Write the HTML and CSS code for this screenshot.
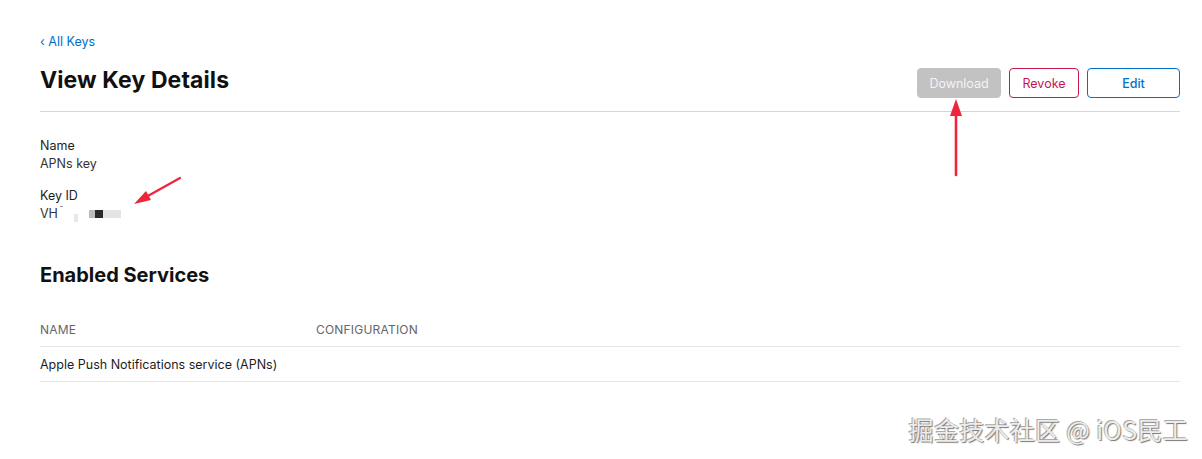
FILE: index.html
```html
<!DOCTYPE html>
<html>
<head>
<meta charset="utf-8">
<link rel="stylesheet" href="styles.css">
</head>
<body>
<div class="page">
  <a class="back" href="#">‹ All Keys</a>
  <div class="header">
    <h1 class="title">View Key Details</h1>
    <div class="actions">
      <button class="btn btn-download">Download</button>
      <button class="btn btn-revoke">Revoke</button>
      <button class="btn btn-edit">Edit</button>
    </div>
  </div>
  <div class="details">
    <div class="field">
      <div class="label">Name</div>
      <div class="value">APNs key</div>
    </div>
    <div class="field">
      <div class="label">Key ID</div>
      <div class="value keyid">VH<span class="tick">ˉ</span><span class="blur b1"></span><span class="blur b2"></span><span class="blur b3"></span><span class="blur b4"></span></div>
    </div>
  </div>
  <h2 class="section">Enabled Services</h2>
  <div class="table">
    <div class="row head">
      <div class="col-name">NAME</div>
      <div class="col-config">CONFIGURATION</div>
    </div>
    <div class="row">
      <div class="col-name">Apple Push Notifications service (APNs)</div>
      <div class="col-config"></div>
    </div>
  </div>
</div>
<svg class="arrows" width="1202" height="459" viewBox="0 0 1202 459">
  <path d="M180 178 L146 197" stroke="#f0243a" stroke-width="2.2" fill="none" stroke-linecap="round"/>
  <path d="M134 204 L146 191 L151 200 Z" fill="#f0243a"/>
  <path d="M956 175 L956 110" stroke="#f0243a" stroke-width="2.6" fill="none" stroke-linecap="round"/>
  <path d="M956 99 L950 116 L962 116 Z" fill="#f0243a"/>
</svg>
<div class="watermark">掘金技术社区 @ iOS民工</div>
</body>
</html>
```
FILE: styles.css
```css
* { box-sizing: border-box; }
html, body { margin: 0; padding: 0; background: #fff; }
body {
  font-family: "Inter", "Liberation Sans", "Noto Sans CJK SC", sans-serif;
  color: #1d1d1f;
  width: 1202px;
  height: 459px;
  overflow: hidden;
  position: relative;
}
.page {
  padding: 34px 22px 0 40px;
}
.back {
  display: block;
  font-size: 12.5px;
  color: #0070c9;
  text-decoration: none;
  line-height: 16px;
}
.header {
  display: flex;
  align-items: flex-end;
  justify-content: space-between;
  border-bottom: 1px solid #d6d6d6;
  padding-bottom: 13px;
  margin-top: 16px;
}
.title {
  margin: 0;
  font-size: 23px;
  font-weight: 700;
  line-height: 28px;
  letter-spacing: 0.1px;
  margin-bottom: 4px;
  color: #111;
}
.actions {
  display: flex;
  gap: 8px;
}
.btn {
  font-family: inherit;
  font-size: 12.5px;
  height: 30px;
  border-radius: 4px;
  padding: 0;
  background: #fff;
  cursor: pointer;
}
.btn-download {
  width: 84px;
  background: #c2c2c2;
  border: 1px solid #c2c2c2;
  color: #f4f4f4;
}
.btn-revoke {
  width: 70px;
  border: 1px solid #c6194a;
  color: #c6194a;
}
.btn-edit {
  width: 93px;
  border: 1px solid #0070c9;
  color: #0070c9;
  font-weight: 500;
}
.details {
  padding-top: 26px;
  display: flex;
  flex-direction: column;
  gap: 16px;
}
.field { display: flex; flex-direction: column; gap: 2px; }
.label { font-size: 12.5px; line-height: 16px; color: #1d1d1f; }
.value { font-size: 12.5px; line-height: 16px; color: #333; }
.keyid { display: flex; align-items: center; }
.tick { font-size: 10px; margin-left: 1px; margin-top: -8px; color: #666; }
.blur { display: inline-block; height: 8px; }
.b1 { background: #e8e8e8; margin-left: 10px; height: 8px; margin-top: 8px; width: 4px; }
.b2 { width: 6px; background: #bcbcbc; margin-left: 11px; }
.b3 { width: 8px; background: #2a2a2a; }
.b4 { width: 18px; background: #e4e4e4; }
.section {
  margin: 41px 0 0;
  font-size: 20px;
  font-weight: 700;
  line-height: 24px;
  color: #111;
}
.table {
  margin-top: 25px;
}
.row {
  display: flex;
  border-bottom: 1px solid #e6e6e6;
  font-size: 12.5px;
  height: 35px;
  align-items: center;
}
.row.head {
  height: 35px;
  color: #666;
  font-size: 12px;
  letter-spacing: 0.2px;
}
.col-name { width: 276px; }
.col-config { flex: 1; }
.arrows {
  position: absolute;
  left: 0;
  top: 0;
  pointer-events: none;
}
.watermark {
  position: absolute;
  right: 14px;
  top: 413px;
  font-size: 25px;
  line-height: 32px;
  font-family: "Noto Sans CJK SC", sans-serif;
  color: #ececec;
  text-shadow: 1px 1px 1px #777, -1px -1px 0 #aaa;
  letter-spacing: 0.3px;
}
```
